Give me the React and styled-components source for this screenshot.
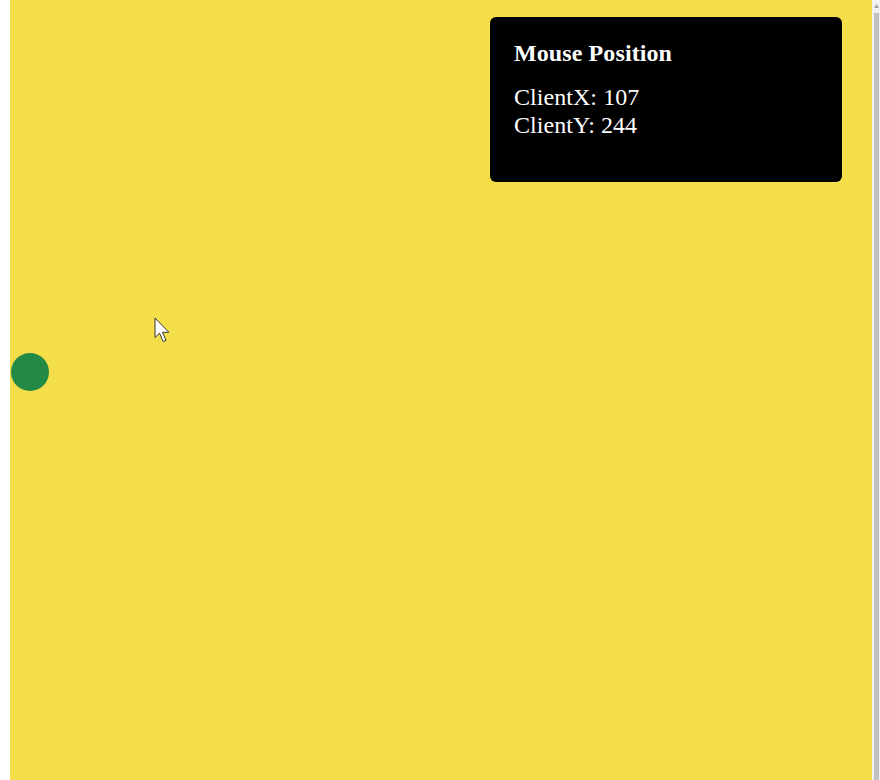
import React from 'react';
import styled, { createGlobalStyle } from 'styled-components';

const GlobalStyle = createGlobalStyle`
  html, body {
    margin: 0;
    padding: 0;
    background: #ffffff;
    font-family: "Liberation Serif", "Times New Roman", serif;
    overflow: hidden;
  }
`;

const Page = styled.div`
  display: flex;
  height: 780px;
  padding-left: 10px;
`;

const Canvas = styled.main`
  flex: 1;
  position: relative;
  background: #f4de4a;
`;

const Scrollbar = styled.div`
  width: 8px;
  display: flex;
  flex-direction: column;
  background: #f1f1f1;
`;

const ScrollArrow = styled.div`
  height: 13px;
  display: flex;
  justify-content: center;
  padding-top: 4px;
  box-sizing: border-box;
`;

const ScrollThumb = styled.div`
  flex: 1;
  margin: 0 1px 0 1.5px;
  background: #c1c1c1;
`;

const InfoPanel = styled.section`
  position: absolute;
  top: 17px;
  right: 30px;
  width: 352px;
  height: 165px;
  box-sizing: border-box;
  padding: 23px 24px;
  background: #000000;
  border-radius: 6px;
  color: #ffffff;
`;

const Title = styled.h2`
  margin: 0 0 16px;
  font-size: 24px;
  font-weight: 700;
  letter-spacing: 0.1px;
`;

const Coord = styled.p`
  margin: 0;
  font-size: 24px;
  line-height: 28.3px;
  letter-spacing: 0.05px;
`;

const Dot = styled.div`
  position: absolute;
  left: ${(p) => p.x}px;
  top: ${(p) => p.y}px;
  width: 38px;
  height: 38px;
  border-radius: 50%;
  background: #238a46;
`;

const Pointer = styled.svg`
  position: absolute;
  left: ${(p) => p.x}px;
  top: ${(p) => p.y}px;
`;

export default function App() {
  const pos = { x: 107, y: 244 };
  return (
    <>
      <GlobalStyle />
      <Page>
        <Canvas>
          <Dot x={1} y={353} />
          <Pointer x={144} y={317} width="18" height="27" viewBox="0 0 18 27">
            <path
              d="M1 1 L1 20.5 L5.5 16.2 L9.2 24.6 L12 23.4 L8.5 15.3 L14.8 15.3 Z"
              fill="#ffffff"
              stroke="#333333"
              strokeWidth="1"
              strokeLinejoin="round"
            />
          </Pointer>
          <InfoPanel>
            <Title>Mouse Position</Title>
            <Coord>ClientX: {pos.x}</Coord>
            <Coord>ClientY: {pos.y}</Coord>
          </InfoPanel>
        </Canvas>
        <Scrollbar>
          <ScrollArrow>
            <svg width="5" height="4" viewBox="0 0 5 4">
              <path d="M0 4 L2.5 0 L5 4 Z" fill="#a3a3a3" />
            </svg>
          </ScrollArrow>
          <ScrollThumb />
        </Scrollbar>
      </Page>
    </>
  );
}
